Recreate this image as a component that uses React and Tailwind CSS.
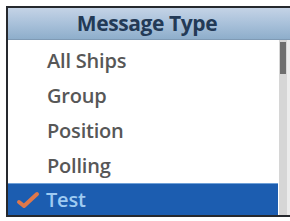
export default function App() {
  const items = ["All Ships", "Group", "Position", "Polling"];
  return (
    <div className="w-[290px] h-[221px] bg-white pt-[6px] pl-[6px] overflow-hidden" style={{ fontFamily: "'Open Sans', 'DejaVu Sans', sans-serif" }}>
      <div className="w-[284px] h-[211px] border-l-2 border-t-2 border-b-2 border-[#26292e] flex flex-col">
        <div className="h-[32px] flex items-center justify-center bg-gradient-to-b from-[#c4d3e6] via-[#a9c1da] to-[#8eaecb] border-b border-[#7f9ab4]">
          <span className="text-[21px] font-bold text-[#233a56] tracking-[-0.4px] ml-[-4px]">Message Type</span>
        </div>
        <div className="flex flex-1">
          <div className="flex-1 flex flex-col pt-[3px]">
            {items.map((t) => (
              <div key={t} className="h-[35px] flex items-center pl-[39px] text-[20px] font-semibold text-[#575757] tracking-[-0.2px]">
                {t}
              </div>
            ))}
            <div className="flex-1 mr-[1px] flex items-center bg-[#1c5db0] border-t border-[#6fa0d8]">
              <svg width="24" height="18" viewBox="0 0 24 18" className="ml-[8px] mr-[6px]">
                <path d="M3 11 L8 15 L21 3" fill="none" stroke="#e0784a" strokeWidth="4" strokeLinecap="round" strokeLinejoin="round" />
              </svg>
              <span className="text-[20px] font-semibold text-[#9fcbf2] tracking-[-0.2px]">Test</span>
            </div>
          </div>
          <div className="w-[8px] bg-[#d6d6d6] flex flex-col">
            <div className="h-[32px] mt-[2px] mx-[1px] bg-[#6e6e6e]" />
          </div>
          <div className="w-[3px] bg-[#ececec]" />
        </div>
      </div>
    </div>
  );
}
